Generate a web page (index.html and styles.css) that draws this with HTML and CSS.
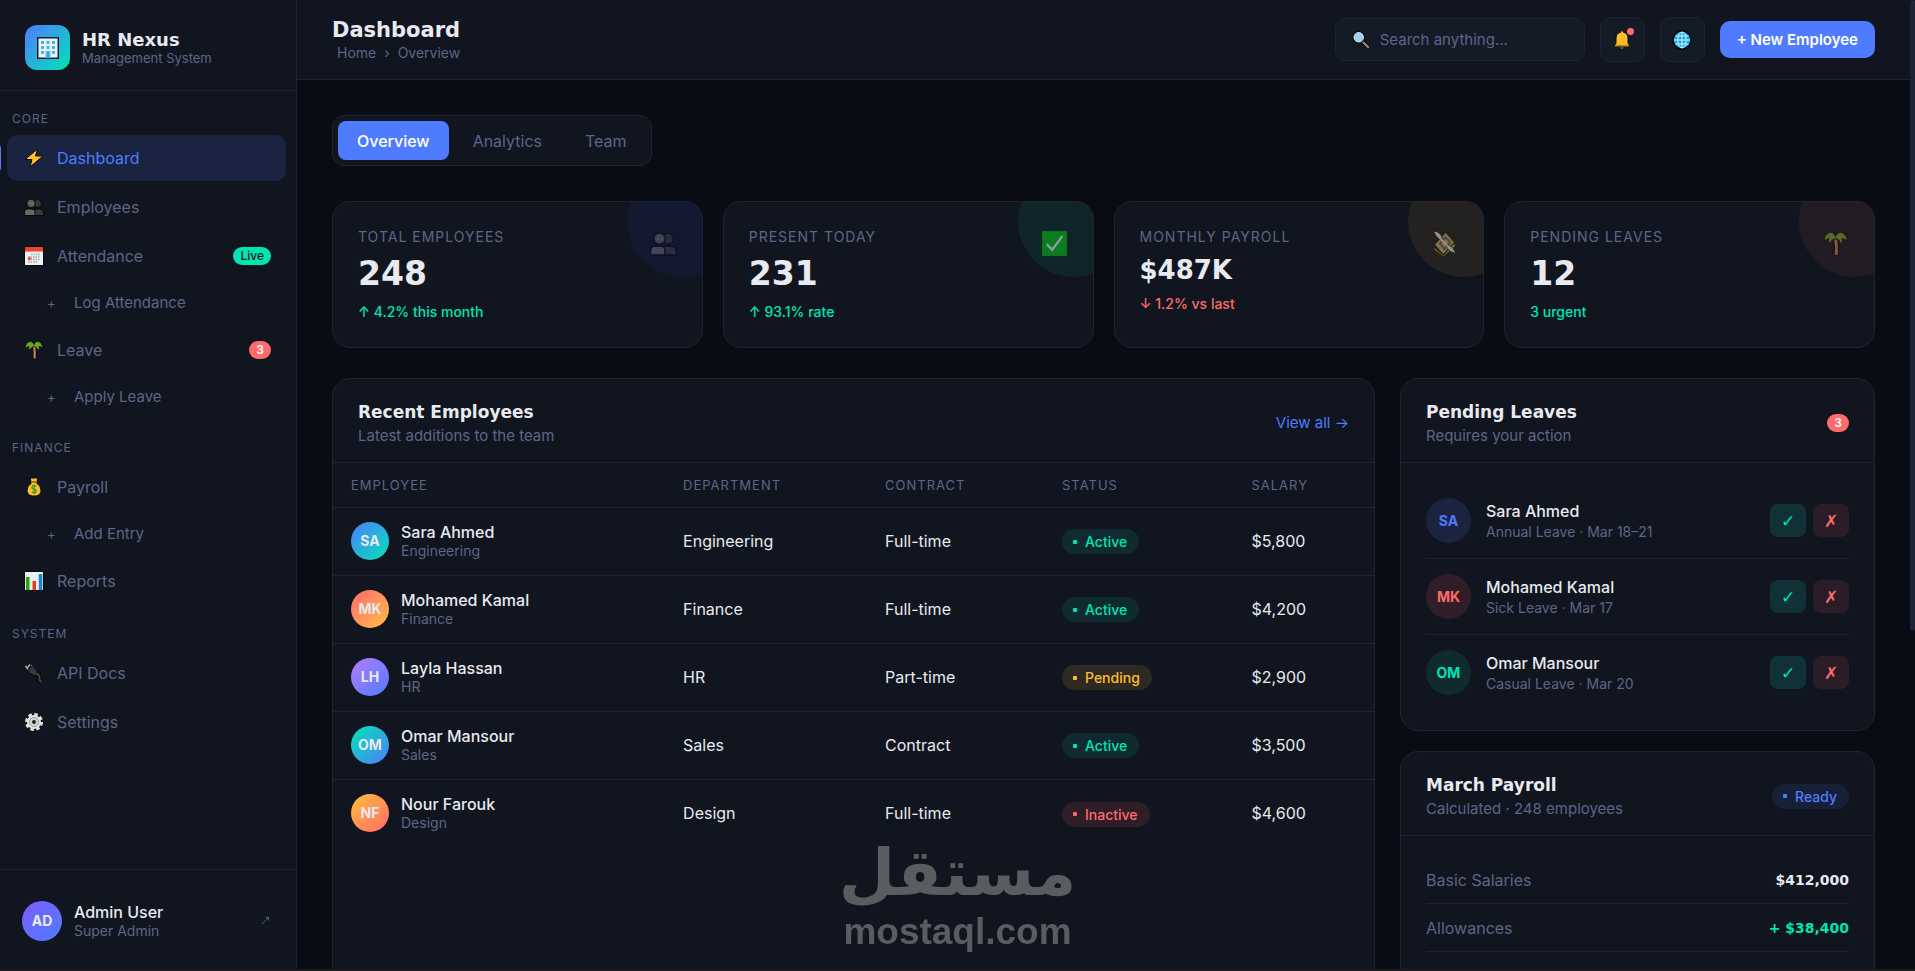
FILE: index.html
```html
<!DOCTYPE html>
<html lang="en">
<head>
	<meta charset="UTF-8">
	<meta name="viewport" content="width=device-width, initial-scale=1">
	<title>HR Nexus - Dashboard</title>
	<link rel="stylesheet" href="styles.css">
</head>
<body>
	<!-- Icon sprite -->
	<svg class="sprite" aria-hidden="true">
		<symbol id="i-building" viewBox="0 0 24 24">
			<rect x="1" y="1" width="22" height="22" fill="#16202e"/>
			<rect x="2.500" y="2.500" width="19" height="19" fill="#eef1f5"/>
			<path d="M5 5h3v3H5zM10.500 5h3v3h-3zM16 5h3v3h-3zM5 10h3v3H5zM10.500 10h3v3h-3zM16 10h3v3h-3zM5 15h3v3H5zM16 15h3v3h-3z" fill="#35bdf2"/>
			<path d="M9.500 15h5v7h-5z" fill="#4cc3f5"/>
			<path d="M12 16v6" stroke="#1b8ec4"/>
		</symbol>
		<symbol id="i-bolt" viewBox="0 0 20 20">
			<path d="M13.500 1 1 11.500h7L6 19 19 8h-7.500z" fill="#ffc22e" stroke="#080808" stroke-width="1" stroke-linejoin="round"/>
		</symbol>
		<symbol id="i-people" viewBox="0 0 20 20">
			<g stroke="#060606" stroke-width="1">
				<circle cx="13.500" cy="6.500" r="4" fill="#363636"/>
				<path d="M9 18.500v-3.500q0-3 3-3h4q3.500 0 3.500 3.500v3z" fill="#3b3b3b"/>
				<circle cx="7" cy="6.500" r="4.200" fill="#5e5e5e"/>
				<path d="M.5 18.500V15q0-3 3-3H8q3 0 3 3v3.500z" fill="#686868"/>
			</g>
			<path d="M5.500 6.500h1M8.500 6.500h.8" stroke="#999"/>
		</symbol>
		<symbol id="i-calendar" viewBox="0 0 20 20">
			<rect x=".5" y=".5" width="19" height="19" fill="#f1f1f1" stroke="#0a0a0a"/>
			<rect x="1" y="1" width="18" height="4.500" fill="#ee432d"/>
			<path d="M7 8.500h9M4 11h12M4 13.500h12M4 16h9" stroke="#aaa" stroke-width="1.400" stroke-dasharray="1.500 1"/>
			<path d="M3.500 12.500h4M5.500 10.500v4" stroke="#ee432d" stroke-width="1.200"/>
		</symbol>
		<symbol id="i-palm" viewBox="0 0 20 20">
			<path d="M10 7q1.200 6 .6 12" stroke="#080808" stroke-width="4" fill="none"/>
			<path d="M10 6q1.200 6 .6 12.500" stroke="#b98758" stroke-width="2.200" fill="none"/>
			<path d="M10 4.500C8.500 1 5 .8 3.500 3 1.500 4 1.500 7 2 8.500 3 7 4 6.500 5 6.500 4.500 8 5 9.500 6 10.500 6.500 8.500 8 7 10 6.500 12 7 13.500 8.500 14 10.500 15.500 9.500 15.500 8 15 6.500 16.500 6.500 17.500 7 18.500 8.500 18.800 6 18 4 16.500 3 15 .8 11.500 1 10 4.500z" fill="#6fa32c" stroke="#0a1405" stroke-width=".8"/>
		</symbol>
		<symbol id="i-bag" viewBox="0 0 20 20">
			<path d="M6 1h8l-1.500 5q4.500 3 4.500 7.500c0 4-3 5.500-7 5.500s-7-1.500-7-5.500Q3 9 7.500 6z" fill="#fbc02d" stroke="#090909"/>
			<path d="M7 5h6" stroke="#a96f0f" stroke-width="1.800"/>
			<path d="M12.500 9.500q-4-2-4.500.5t2.500 2.500q2.500.5 1.500 2.500-1.500 1.500-4 .2M10.200 7.500v9.500" stroke="#3c9a1e" stroke-width="1.300" fill="none"/>
		</symbol>
		<symbol id="i-chart" viewBox="0 0 20 20">
			<rect x=".5" y=".5" width="19" height="19" fill="#efefef" stroke="#0a0a0a"/>
			<path d="M2 6h3.500v13H2z" fill="#22a516"/>
			<path d="M8.500 10H12v9H8.500z" fill="#ee3a24"/>
			<path d="M14.800 3h3.500v16h-3.500z" fill="#1489d2"/>
		</symbol>
		<symbol id="i-plug" viewBox="0 0 20 20">
			<path d="m3 5 3-3.500M1.500 3l3 4M7.500 2l2 3" stroke="#b5b5b5" stroke-width="1.300"/>
			<path d="m3.500 7 5-4.500 4.500 5 1 5.500-4.500-.5-5-3z" fill="#3a3636" stroke="#060606"/>
			<path d="M12 10.500q4 1.500 3.500 4.500t2.500 4" stroke="#060606" stroke-width="4" fill="none"/>
			<path d="M12 10.500q4 1.500 3.500 4.500t2.500 4" stroke="#45403f" stroke-width="2" fill="none"/>
		</symbol>
		<symbol id="i-gear" viewBox="0 0 20 20">
			<circle cx="10" cy="10" r="7.500" fill="none" stroke="#e5e3e0" stroke-width="3" stroke-dasharray="3.500 2.390"/>
			<circle cx="10" cy="10" r="7" fill="#e5e3e0"/>
			<circle cx="10" cy="10" r="4.500" fill="#d5d3d0" stroke="#9b989c"/>
			<circle cx="10" cy="10" r="1.900" fill="#17181d"/>
		</symbol>
		<symbol id="i-search" viewBox="0 0 20 20">
			<path d="m11 11 7 7" stroke="#070707" stroke-width="4.500" stroke-linecap="round"/>
			<path d="m11 11 7 7" stroke="#86868a" stroke-width="2.500" stroke-linecap="round"/>
			<circle cx="7.500" cy="7" r="5.800" fill="#9bd2f6" stroke="#080808" stroke-width="2.400"/>
			<circle cx="7.500" cy="7" r="5.300" fill="#9bd2f6" stroke="#dce8ef"/>
		</symbol>
		<symbol id="i-bell" viewBox="0 0 20 20">
			<path d="M8 17h4v1.500q-2 1.500-4 0z" fill="#b97e12" stroke="#080808" stroke-width=".7"/>
			<path d="M10 .8c1 0 1.500.7 1.500 1.500C14.500 3 16 5 16 8v5l2 3.500H2L4 13V8c0-3 1.500-5 4.500-5.700C8.500 1.500 9 .8 10 .8z" fill="#fdbd2c" stroke="#080808"/>
			<path d="M3.300 14.800h13.400l1 1.700H2.300z" fill="#c58a17"/>
		</symbol>
		<symbol id="i-globe" viewBox="0 0 20 20">
			<circle cx="10" cy="10" r="9" fill="#17a9df" stroke="#080808" stroke-width="1.500"/>
			<g fill="none" stroke="#d5f3ff" stroke-width="1">
				<ellipse cx="10" cy="10" rx="4.200" ry="8"/>
				<path d="M10 2v16M2 10h16M3.500 6h13M3.500 14h13"/>
			</g>
		</symbol>
		<symbol id="i-check" viewBox="0 0 24 24">
			<rect x=".5" y=".5" width="23" height="23" fill="#10b510" stroke="#0b250b"/>
			<path d="m5 12.500 5 5L19 5.500" fill="none" stroke="#f4f4f4" stroke-width="2"/>
		</symbol>
		<symbol id="i-money" viewBox="0 0 24 24">
			<path d="M3 13 13 2l8 9-10 11z" fill="#bfa887" stroke="#15150e"/>
			<path d="m3 16 8 7 10-11v2.500L11 23.500 3 17z" fill="#c9c930"/>
			<path d="m8 12 5-5.500 4 4.500-5 6z" fill="none" stroke="#665943" stroke-width="1.800"/>
			<path d="M2 1q6 0 8.500 7L5 5.500zM13 13q7 0 9 9-2.500-3-6-4z" fill="#eee" stroke="#151515" stroke-width=".7"/>
			<path d="m5 4 14 15" stroke="#ddd" stroke-width="1.800"/>
		</symbol>
	</svg>

	<div class="app">
		<aside class="sidebar">
			<div class="brand">
				<div class="brand-logo"><svg><use href="#i-building"/></svg></div>
				<div>
					<div class="brand-name">HR Nexus</div>
					<div class="brand-sub">Management System</div>
				</div>
			</div>

			<nav class="nav">
				<div class="nav-label">Core</div>
				<a href="#" class="nav-item active"><svg class="icon"><use href="#i-bolt"/></svg>Dashboard</a>
				<a href="#" class="nav-item"><svg class="icon"><use href="#i-people"/></svg>Employees</a>
				<a href="#" class="nav-item"><svg class="icon"><use href="#i-calendar"/></svg>Attendance<span class="badge live">Live</span></a>
				<a href="#" class="nav-item sub"><span class="plus">+</span>Log Attendance</a>
				<a href="#" class="nav-item"><svg class="icon"><use href="#i-palm"/></svg>Leave<span class="badge">3</span></a>
				<a href="#" class="nav-item sub"><span class="plus">+</span>Apply Leave</a>

				<div class="nav-label">Finance</div>
				<a href="#" class="nav-item"><svg class="icon"><use href="#i-bag"/></svg>Payroll</a>
				<a href="#" class="nav-item sub"><span class="plus">+</span>Add Entry</a>
				<a href="#" class="nav-item"><svg class="icon"><use href="#i-chart"/></svg>Reports</a>

				<div class="nav-label">System</div>
				<a href="#" class="nav-item"><svg class="icon"><use href="#i-plug"/></svg>API Docs</a>
				<a href="#" class="nav-item"><svg class="icon"><use href="#i-gear"/></svg>Settings</a>
			</nav>

			<div class="user">
				<div class="avatar user-avatar">AD</div>
				<div class="user-info">
					<div class="user-name">Admin User</div>
					<div class="small">Super Admin</div>
				</div>
				<svg class="user-arrow" viewBox="0 0 10 10"><path d="M1 9 8.500 1.500M5 1.500h3.500V5" fill="none" stroke="currentColor"/></svg>
			</div>
		</aside>

		<main class="main">
			<header class="topbar">
				<div>
					<h1>Dashboard</h1>
					<div class="crumbs"><a href="#">Home</a><span>›</span><span>Overview</span></div>
				</div>
				<div class="actions">
					<label class="search" for="search">
						<svg class="icon"><use href="#i-search"/></svg>
						<input type="text" id="search" placeholder="Search anything..." aria-label="Search">
					</label>
					<button type="button" class="icon-btn" aria-label="Notifications"><svg class="icon"><use href="#i-bell"/></svg><span class="dot"></span></button>
					<button type="button" class="icon-btn" aria-label="Language"><svg class="icon"><use href="#i-globe"/></svg></button>
					<button type="button" class="btn-primary">+ New Employee</button>
				</div>
			</header>

			<div class="content">
				<div class="tabs">
					<button type="button" class="tab active">Overview</button>
					<button type="button" class="tab">Analytics</button>
					<button type="button" class="tab">Team</button>
				</div>

				<section class="stats">
					<div class="stat blue">
						<svg class="stat-icon"><use href="#i-people"/></svg>
						<div class="stat-label">Total Employees</div>
						<div class="stat-value">248</div>
						<div class="stat-delta">↑ 4.2% this month</div>
					</div>
					<div class="stat green">
						<svg class="stat-icon"><use href="#i-check"/></svg>
						<div class="stat-label">Present Today</div>
						<div class="stat-value">231</div>
						<div class="stat-delta">↑ 93.1% rate</div>
					</div>
					<div class="stat yellow">
						<svg class="stat-icon"><use href="#i-money"/></svg>
						<div class="stat-label">Monthly Payroll</div>
						<div class="stat-value money">$487K</div>
						<div class="stat-delta down">↓ 1.2% vs last</div>
					</div>
					<div class="stat red">
						<svg class="stat-icon"><use href="#i-palm"/></svg>
						<div class="stat-label">Pending Leaves</div>
						<div class="stat-value">12</div>
						<div class="stat-delta">3 urgent</div>
					</div>
				</section>

				<div class="panels">
					<section class="card">
						<div class="card-head">
							<div>
								<h2>Recent Employees</h2>
								<p>Latest additions to the team</p>
							</div>
							<a href="#" class="view-all">View all →</a>
						</div>
						<table>
							<thead>
								<tr>
									<th class="col-employee">Employee</th>
									<th class="col-department">Department</th>
									<th class="col-contract">Contract</th>
									<th class="col-status">Status</th>
									<th>Salary</th>
								</tr>
							</thead>
							<tbody>
								<tr>
									<td><div class="person"><div class="avatar a-sa">SA</div><div><div class="name">Sara Ahmed</div><div class="small">Engineering</div></div></div></td>
									<td>Engineering</td>
									<td>Full-time</td>
									<td><span class="pill active">Active</span></td>
									<td>$5,800</td>
								</tr>
								<tr>
									<td><div class="person"><div class="avatar a-mk">MK</div><div><div class="name">Mohamed Kamal</div><div class="small">Finance</div></div></div></td>
									<td>Finance</td>
									<td>Full-time</td>
									<td><span class="pill active">Active</span></td>
									<td>$4,200</td>
								</tr>
								<tr>
									<td><div class="person"><div class="avatar a-lh">LH</div><div><div class="name">Layla Hassan</div><div class="small">HR</div></div></div></td>
									<td>HR</td>
									<td>Part-time</td>
									<td><span class="pill pending">Pending</span></td>
									<td>$2,900</td>
								</tr>
								<tr>
									<td><div class="person"><div class="avatar a-om">OM</div><div><div class="name">Omar Mansour</div><div class="small">Sales</div></div></div></td>
									<td>Sales</td>
									<td>Contract</td>
									<td><span class="pill active">Active</span></td>
									<td>$3,500</td>
								</tr>
								<tr>
									<td><div class="person"><div class="avatar a-nf">NF</div><div><div class="name">Nour Farouk</div><div class="small">Design</div></div></div></td>
									<td>Design</td>
									<td>Full-time</td>
									<td><span class="pill inactive">Inactive</span></td>
									<td>$4,600</td>
								</tr>
							</tbody>
						</table>
					</section>

					<div class="side">
						<section class="card">
							<div class="card-head">
								<div>
									<h2>Pending Leaves</h2>
									<p>Requires your action</p>
								</div>
								<span class="badge">3</span>
							</div>
							<div class="card-body">
								<div class="leave">
									<div class="avatar t-blue">SA</div>
									<div class="leave-info"><div class="name">Sara Ahmed</div><div class="small">Annual Leave · Mar 18–21</div></div>
									<button type="button" class="act ok" aria-label="Approve">✓</button>
									<button type="button" class="act no" aria-label="Reject">✗</button>
								</div>
								<div class="leave">
									<div class="avatar t-red">MK</div>
									<div class="leave-info"><div class="name">Mohamed Kamal</div><div class="small">Sick Leave · Mar 17</div></div>
									<button type="button" class="act ok" aria-label="Approve">✓</button>
									<button type="button" class="act no" aria-label="Reject">✗</button>
								</div>
								<div class="leave">
									<div class="avatar t-green">OM</div>
									<div class="leave-info"><div class="name">Omar Mansour</div><div class="small">Casual Leave · Mar 20</div></div>
									<button type="button" class="act ok" aria-label="Approve">✓</button>
									<button type="button" class="act no" aria-label="Reject">✗</button>
								</div>
							</div>
						</section>

						<section class="card grow">
							<div class="card-head">
								<div>
									<h2>March Payroll</h2>
									<p>Calculated · 248 employees</p>
								</div>
								<span class="pill ready">Ready</span>
							</div>
							<div class="card-body">
								<div class="pay-row"><span>Basic Salaries</span><strong>$412,000</strong></div>
								<div class="pay-row"><span>Allowances</span><strong class="plus-amount">+ $38,400</strong></div>
							</div>
						</section>
					</div>
				</div>
			</div>
		</main>
	</div>

	<div class="scroll-thumb"></div>
	<div class="bottom-strip"></div>
	<div class="watermark">
		<div class="watermark-ar" lang="ar">مستقل</div>
		<div class="watermark-en">mostaql.com</div>
	</div>
</body>
</html>
```
FILE: styles.css
```css
:root {
	--bg: #090c13;
	--surface: #11151f;
	--surface-2: #151a27;
	--border: #1e2436;
	--text: #e8eaf0;
	--muted: #5d6688;
	--accent: #4f7cff;
	--green: #00e5b4;
	--red: #ff6b6b;
	--yellow: #ffbe2e;
	--head: "DejaVu Sans", sans-serif;
}

* {
	box-sizing: border-box;
}

body {
	margin: 0;
	background: var(--bg);
	color: var(--text);
	font-family: Inter, sans-serif;
	font-size: 16px;
	line-height: 20px;
	overflow: hidden;
}

h1, h2, p {
	margin: 0;
}

a {
	color: inherit;
	text-decoration: none;
}

button, input {
	font-family: inherit;
}

.sprite {
	position: absolute;
	width: 0;
	height: 0;
}

.icon {
	width: 20px;
	height: 20px;
	flex: none;
}

.app {
	display: flex;
	height: 100vh;
}

/* Sidebar */
.sidebar {
	width: 297px;
	flex: none;
	display: flex;
	flex-direction: column;
	background: var(--surface);
	border-right: 1px solid var(--border);
}

.brand {
	display: flex;
	align-items: center;
	gap: 12px;
	padding: 25px 25px 20px;
	border-bottom: 1px solid var(--border);
}

.brand-logo {
	display: flex;
	align-items: center;
	justify-content: center;
	width: 45px;
	height: 45px;
	border-radius: 12px;
	background: linear-gradient(135deg, #4f7cff, #00e5b4);
}

.brand-logo svg {
	width: 24px;
	height: 24px;
}

.brand-name {
	font-family: var(--head);
	font-size: 18px;
	font-weight: bold;
	line-height: 20px;
}

.brand-sub {
	font-size: 13px;
	line-height: 16px;
	color: var(--muted);
}

.nav {
	flex: 1;
	display: flex;
	flex-direction: column;
	gap: 3px;
	padding: 0 10px 0 7px;
}

.nav-label {
	margin-top: 20px;
	margin-bottom: 5px;
	padding-left: 5px;
	font-size: 12px;
	line-height: 16px;
	letter-spacing: 1px;
	text-transform: uppercase;
	color: var(--muted);
}

.nav-label ~ .nav-label {
	margin-top: 19px;
}

.nav-item {
	position: relative;
	display: flex;
	align-items: center;
	gap: 13px;
	height: 46px;
	padding: 0 15px 0 17px;
	border-radius: 10px;
	color: var(--muted);
}

.nav-item.active {
	background: #1a2340;
	color: var(--accent);
}

.nav-item.active::before {
	content: "";
	position: absolute;
	left: -9px;
	top: 10px;
	width: 3px;
	height: 26px;
	border-radius: 0 3px 3px 0;
	background: var(--accent);
}

.nav-item.sub {
	height: 42px;
	padding-left: 40px;
	font-size: 15px;
}

.plus {
	width: 14px;
	font-size: 13px;
}

.badge {
	margin-left: auto;
	padding: 0 7px;
	border-radius: 9px;
	background: var(--red);
	color: #fff;
	font-size: 12px;
	font-weight: 600;
	line-height: 18px;
}

.badge.live {
	background: var(--green);
	color: #10151c;
	font-weight: 500;
}

.user {
	display: flex;
	align-items: center;
	gap: 12px;
	height: 102px;
	padding: 0 26px 0 22px;
	border-top: 1px solid var(--border);
}

.user-info {
	flex: 1;
}

.user-name {
	font-weight: 500;
}

.user-arrow {
	width: 9px;
	height: 9px;
	color: var(--muted);
}

.small {
	font-size: 14px;
	line-height: 18px;
	color: var(--muted);
}

.avatar {
	display: flex;
	align-items: center;
	justify-content: center;
	flex: none;
	width: 38px;
	height: 38px;
	border-radius: 50%;
	font-size: 14px;
	font-weight: 700;
}

.user-avatar {
	width: 40px;
	height: 40px;
	background: linear-gradient(135deg, #7b5cff, #4f7cff);
}

.a-sa { background: linear-gradient(135deg, #4f7cff, #00e5b4); }
.a-mk { background: linear-gradient(135deg, #ff6b6b, #ffbe4a); }
.a-lh { background: linear-gradient(135deg, #b57bff, #4f7cff); }
.a-om { background: linear-gradient(135deg, #00e5b4, #4f7cff); }
.a-nf { background: linear-gradient(135deg, #ffbe3a, #ff6b6b); }

/* Top bar */
.main {
	flex: 1;
	min-width: 0;
	overflow: hidden;
	padding-right: 5px;
}

.topbar {
	display: flex;
	align-items: center;
	justify-content: space-between;
	height: 80px;
	padding: 0 35px;
	background: var(--surface);
	border-bottom: 1px solid var(--border);
}

h1 {
	font-family: var(--head);
	font-size: 21px;
	line-height: 26px;
}

.crumbs {
	display: flex;
	gap: 8px;
	padding-left: 5px;
	font-size: 14px;
	color: var(--muted);
}

.actions {
	display: flex;
	align-items: center;
	gap: 15px;
}

.search {
	display: flex;
	align-items: center;
	gap: 10px;
	width: 250px;
	height: 43px;
	padding: 0 16px;
	border: 1px solid var(--border);
	border-radius: 10px;
	background: var(--surface-2);
}

.search .icon {
	width: 18px;
	height: 18px;
}

.search input {
	width: 100%;
	min-width: 0;
	padding: 0;
	border: 0;
	outline: 0;
	background: none;
	color: var(--text);
	font-size: 15px;
}

.search input::placeholder {
	color: var(--muted);
}

.icon-btn {
	position: relative;
	display: flex;
	align-items: center;
	justify-content: center;
	width: 45px;
	height: 45px;
	padding: 0;
	border: 1px solid var(--border);
	border-radius: 10px;
	background: var(--surface-2);
}

.dot {
	position: absolute;
	top: 10px;
	right: 10px;
	width: 7px;
	height: 7px;
	border-radius: 50%;
	background: var(--red);
}

.btn-primary {
	height: 37px;
	padding: 0 17px;
	border: 0;
	border-radius: 10px;
	background: var(--accent);
	color: #fff;
	font-size: 15px;
	font-weight: 600;
}

/* Content */
.content {
	padding: 35px;
}

.tabs {
	display: inline-flex;
	gap: 5px;
	padding: 5px;
	border: 1px solid var(--border);
	border-radius: 12px;
	background: var(--surface);
}

.tab {
	height: 39px;
	padding: 0 19px;
	border: 0;
	border-radius: 8px;
	background: none;
	color: var(--muted);
	font-size: 16px;
}

.tab.active {
	background: var(--accent);
	color: #fff;
	font-weight: 500;
}

.stats {
	display: grid;
	grid-template-columns: repeat(4, 1fr);
	gap: 20px;
	margin: 35px 0 30px;
}

.stat {
	position: relative;
	overflow: hidden;
	height: 147px;
	padding: 25px;
	border: 1px solid var(--border);
	border-radius: 18px;
	background: var(--surface);
}

.stat::after {
	content: "";
	position: absolute;
	top: -37px;
	right: -37px;
	width: 112px;
	height: 112px;
	border-radius: 50%;
	opacity: 0.08;
}

.stat.blue::after { background: #2f49ff; }
.stat.green::after { background: var(--green); }
.stat.yellow::after { background: var(--yellow); }
.stat.red::after { background: var(--red); }

.stat-icon {
	position: absolute;
	top: 28px;
	right: 25px;
	width: 27px;
	height: 27px;
	opacity: 0.6;
}

.stat-label {
	font-size: 14px;
	letter-spacing: 1px;
	text-transform: uppercase;
	color: var(--muted);
}

.stat-value {
	margin: 5px 0 6px;
	font-family: var(--head);
	font-size: 33px;
	font-weight: bold;
	line-height: 44px;
}

.stat-value.money {
	font-size: 26px;
	line-height: 36px;
}

.stat-delta {
	font-size: 14px;
	font-weight: 500;
	color: var(--green);
}

.stat-delta.down {
	color: var(--red);
}

.panels {
	display: grid;
	grid-template-columns: 1fr 475px;
	gap: 25px;
	min-height: 640px;
}

.side {
	display: flex;
	flex-direction: column;
	gap: 20px;
}

.card {
	border: 1px solid var(--border);
	border-radius: 18px;
	background: var(--surface);
}

.card.grow {
	flex: 1;
}

.card-head {
	display: flex;
	align-items: center;
	justify-content: space-between;
	padding: 21px 25px 16px;
	border-bottom: 1px solid var(--border);
}

h2 {
	font-family: var(--head);
	font-size: 17px;
	line-height: 24px;
}

.card-head p {
	margin-top: 2px;
	font-size: 15px;
	color: var(--muted);
}

.view-all {
	font-size: 15px;
	color: var(--accent);
}

table {
	width: 100%;
	border-collapse: collapse;
	table-layout: fixed;
}

th, td {
	padding: 0 18px;
	text-align: left;
	border-bottom: 1px solid var(--border);
}

th {
	height: 44px;
	font-size: 13px;
	font-weight: 400;
	letter-spacing: 1px;
	text-transform: uppercase;
	color: var(--muted);
}

td {
	height: 68px;
}

tbody tr:last-child td {
	border-bottom: 0;
}

.col-employee { width: 31.9%; }
.col-department { width: 19.4%; }
.col-contract { width: 17%; }
.col-status { width: 18.2%; }

.person {
	display: flex;
	align-items: center;
	gap: 12px;
}

.name {
	font-weight: 500;
}

.pill {
	display: inline-flex;
	align-items: center;
	gap: 8px;
	padding: 0 12px 0 11px;
	border-radius: 13px;
	font-size: 14px;
	font-weight: 500;
	line-height: 25px;
}

.pill::before {
	content: "";
	width: 4px;
	height: 4px;
	border-radius: 1px;
	background: currentColor;
}

.pill.active { background: #0f2b30; color: var(--green); }
.pill.pending { background: #2e2923; color: var(--yellow); }
.pill.inactive { background: #2f1e28; color: var(--red); }
.pill.ready { background: #182038; color: var(--accent); }

.card-body {
	padding: 20px 25px;
}

.leave {
	display: flex;
	align-items: center;
	gap: 7px;
	padding: 15px 0;
	border-bottom: 1px solid var(--border);
}

.leave:last-child {
	border-bottom: 0;
}

.leave .avatar {
	width: 45px;
	height: 45px;
}

.leave-info {
	flex: 1;
	padding-left: 8px;
}

.leave .small {
	margin-top: 2px;
}

.t-blue { background: #1a2340; color: var(--accent); }
.t-red { background: #2f1e28; color: var(--red); }
.t-green { background: #0f2b30; color: var(--green); }

.act {
	width: 36px;
	height: 33px;
	padding: 0;
	border: 0;
	border-radius: 8px;
	font-family: "DejaVu Sans", sans-serif;
	font-size: 17px;
	font-weight: bold;
}

.act.ok { background: #103236; color: var(--green); }
.act.no { background: #2a1d27; color: var(--red); }

.pay-row {
	display: flex;
	align-items: center;
	justify-content: space-between;
	height: 48px;
	border-bottom: 1px solid var(--border);
	color: var(--muted);
}

.pay-row strong {
	font-family: var(--head);
	font-size: 14px;
	color: var(--text);
}

.pay-row .plus-amount {
	color: var(--green);
}

/* Overlays */
.scroll-thumb {
	position: fixed;
	top: 0;
	right: 0;
	width: 5px;
	height: 65vh;
	border-radius: 4px;
	background: #1e2436;
}

.bottom-strip {
	position: fixed;
	left: 0;
	right: 0;
	bottom: 0;
	height: 2px;
	background: #1c1c1e;
}

.watermark {
	position: fixed;
	left: 50%;
	bottom: 18px;
	transform: translateX(-50%);
	text-align: center;
	font-weight: bold;
	color: #5b5c60;
}

.watermark-ar {
	font-family: "DejaVu Sans", sans-serif;
	font-size: 65px;
	line-height: 76px;
}

.watermark-en {
	font-family: "Liberation Sans", sans-serif;
	font-size: 37px;
	line-height: 42px;
}
```
